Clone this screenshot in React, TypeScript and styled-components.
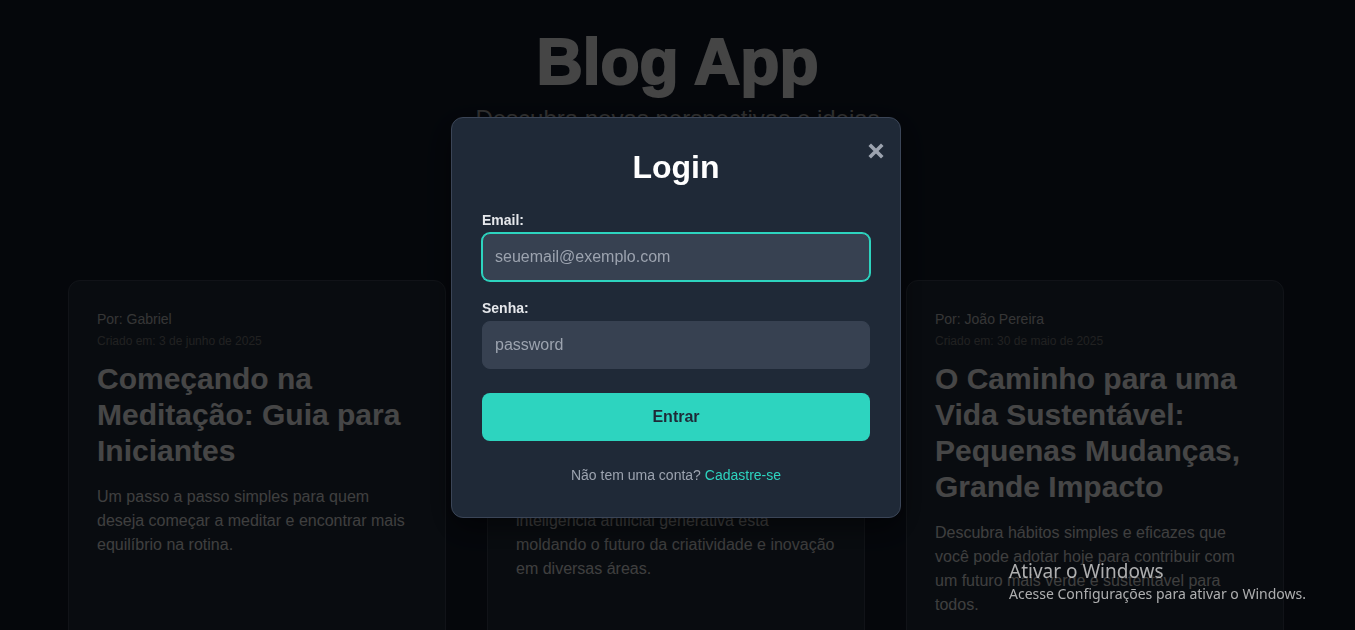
import React from "react";
import styled, { createGlobalStyle } from "styled-components";

const posts = [
  {
    id: 1,
    author: "Gabriel",
    createdAt: "3 de junho de 2025",
    title: "Começando na Meditação: Guia para Iniciantes",
    content:
      "Um passo a passo simples para quem deseja começar a meditar e encontrar mais equilíbrio na rotina.",
  },
  {
    id: 2,
    author: "Maria Silva",
    createdAt: "1 de junho de 2025",
    title: "O Impacto da IA Generativa no Mundo Criativo",
    content:
      "Uma análise profunda sobre como a inteligência artificial generativa está moldando o futuro da criatividade e inovação em diversas áreas.",
  },
  {
    id: 3,
    author: "João Pereira",
    createdAt: "30 de maio de 2025",
    title: "O Caminho para uma Vida Sustentável: Pequenas Mudanças, Grande Impacto",
    content:
      "Descubra hábitos simples e eficazes que você pode adotar hoje para contribuir com um futuro mais verde e sustentável para todos.",
  },
];

const GlobalStyle = createGlobalStyle`
  * { box-sizing: border-box; }
  body {
    margin: 0;
    background: #111827;
    font-family: "Liberation Sans", Arial, sans-serif;
    overflow: hidden;
  }
`;

const Page = styled.main`
  min-height: 100vh;
  padding-top: 26px;
  color: #e5e7eb;
`;

const Header = styled.header`
  text-align: center;
`;

const Title = styled.h1`
  margin: 0;
  font-size: 64px;
  font-weight: 700;
  line-height: 1.15;
  color: #e6e6e6;
  -webkit-text-stroke: 2px #e6e6e6;
`;

const Subtitle = styled.p`
  margin: 5px 0 0;
  font-size: 24px;
  color: #a8a8a8;
`;

const Grid = styled.section`
  display: grid;
  grid-template-columns: repeat(3, 378px);
  gap: 41px;
  justify-content: center;
  margin-top: 147px;
  padding-right: 3px;
`;

const Card = styled.article`
  background: #1f2937;
  border: 1px solid #3a4250;
  border-radius: 12px;
  padding: 30px 28px 40px;
  min-height: 380px;
`;

const Meta = styled.p<{ $small?: boolean }>`
  margin: 0 0 ${(p) => (p.$small ? "13px" : "7px")};
  font-size: ${(p) => (p.$small ? "12px" : "14px")};
  color: ${(p) => (p.$small ? "#707070" : "#b4b4b4")};
`;

const PostTitle = styled.h2`
  margin: 0 0 16px;
  font-size: 30px;
  line-height: 36px;
  font-weight: 700;
  color: #ececec;
`;

const PostText = styled.p`
  margin: 0;
  font-size: 16px;
  line-height: 24px;
  color: #d2d2d2;
`;

const Overlay = styled.div`
  position: fixed;
  inset: 0;
  background: rgba(0, 0, 0, 0.7);
  display: flex;
  align-items: center;
  justify-content: center;
  padding-top: 4px;
`;

const Modal = styled.div`
  position: relative;
  width: 450px;
  margin-right: 3px;
  background: #1f2937;
  border: 1px solid #3b4557;
  border-radius: 12px;
  padding: 31px 30px 34px;
  box-shadow: 0 10px 30px rgba(0, 0, 0, 0.5);
`;

const CloseButton = styled.button`
  position: absolute;
  top: 24px;
  right: 15px;
  width: 18px;
  height: 18px;
  padding: 0;
  border: none;
  background: none;
  color: #9ca3af;
  cursor: pointer;
  display: flex;
  align-items: center;
  justify-content: center;
`;

const ModalTitle = styled.h2`
  margin: 0 0 26px;
  text-align: center;
  font-size: 32px;
  font-weight: 700;
  color: #ffffff;
`;

const Field = styled.div<{ $last?: boolean }>`
  margin-bottom: ${(p) => (p.$last ? "0" : "19px")};
`;

const Label = styled.label`
  display: block;
  margin-bottom: 5px;
  font-size: 14px;
  font-weight: 700;
  color: #e5e7eb;
`;

const Input = styled.input<{ $focused?: boolean }>`
  display: block;
  width: 100%;
  height: 48px;
  padding: 0 12px;
  border-radius: 8px;
  border: 1px solid ${(p) => (p.$focused ? "#2dd4bf" : "#374151")};
  box-shadow: ${(p) => (p.$focused ? "0 0 0 1px #2dd4bf" : "none")};
  background: #374151;
  color: #f3f4f6;
  font-family: "Liberation Sans", Arial, sans-serif;
  font-size: 16px;
  outline: none;
  &::placeholder {
    color: #9ca3af;
  }
`;

const SubmitButton = styled.button`
  display: block;
  width: 100%;
  height: 48px;
  margin-top: 24px;
  border: none;
  border-radius: 8px;
  background: #2dd4bf;
  color: #1f2937;
  font-family: "Liberation Sans", Arial, sans-serif;
  font-size: 16px;
  font-weight: 700;
  cursor: pointer;
`;

const Footer = styled.p`
  margin: 26px 0 0;
  text-align: center;
  font-size: 14px;
  color: #9ca3af;
`;

const Link = styled.a`
  color: #2dd4bf;
  text-decoration: none;
`;

const Watermark = styled.div`
  position: fixed;
  left: 1009px;
  top: 558px;
  color: rgba(220, 220, 220, 0.78);
  font-family: "Noto Sans", "Open Sans", sans-serif;
  pointer-events: none;
`;

const WatermarkTitle = styled.div`
  font-size: 19px;
  line-height: 26px;
`;

const WatermarkText = styled.div`
  font-size: 14px;
  line-height: 20px;
`;

const CloseIcon = () => (
  <svg width="16" height="16" viewBox="0 0 16 16" fill="none">
    <path
      d="M3 3L13 13M13 3L3 13"
      stroke="currentColor"
      strokeWidth="3.6"
      strokeLinecap="square"
    />
  </svg>
);

export default function App() {
  return (
    <>
      <GlobalStyle />
      <Page>
        <Header>
          <Title>Blog App</Title>
          <Subtitle>Descubra novas perspectivas e ideias</Subtitle>
        </Header>
        <Grid>
          {posts.map((post) => (
            <Card key={post.id}>
              <Meta>Por: {post.author}</Meta>
              <Meta $small>Criado em: {post.createdAt}</Meta>
              <PostTitle>{post.title}</PostTitle>
              <PostText>{post.content}</PostText>
            </Card>
          ))}
        </Grid>
      </Page>
      <Overlay>
        <Modal>
          <CloseButton aria-label="Fechar">
            <CloseIcon />
          </CloseButton>
          <ModalTitle>Login</ModalTitle>
          <form onSubmit={(e) => e.preventDefault()}>
            <Field>
              <Label htmlFor="email">Email:</Label>
              <Input
                id="email"
                type="email"
                placeholder="seuemail@exemplo.com"
                $focused
              />
            </Field>
            <Field $last>
              <Label htmlFor="password">Senha:</Label>
              <Input id="password" type="password" placeholder="password" />
            </Field>
            <SubmitButton type="submit">Entrar</SubmitButton>
          </form>
          <Footer>
            Não tem uma conta? <Link href="#">Cadastre-se</Link>
          </Footer>
        </Modal>
      </Overlay>
      <Watermark>
        <WatermarkTitle>Ativar o Windows</WatermarkTitle>
        <WatermarkText>Acesse Configurações para ativar o Windows.</WatermarkText>
      </Watermark>
    </>
  );
}
